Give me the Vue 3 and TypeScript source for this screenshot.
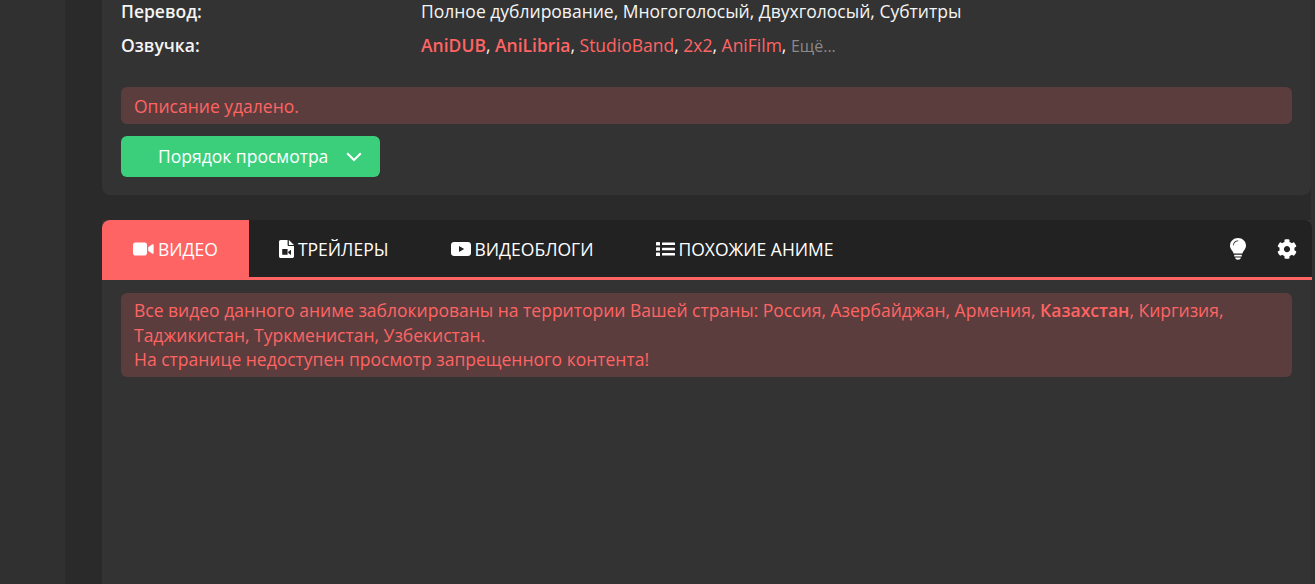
<script setup lang="ts">
const tabs = [
  { label: 'ВИДЕО', icon: 'video', active: true },
  { label: 'ТРЕЙЛЕРЫ', icon: 'file', active: false },
  { label: 'ВИДЕОБЛОГИ', icon: 'youtube', active: false },
  { label: 'ПОХОЖИЕ АНИМЕ', icon: 'list', active: false },
]
</script>

<template>
  <div class="page">
    <div class="rail"></div>
    <main class="column">
      <section class="info-card">
        <dl class="facts">
          <dt>Перевод:</dt>
          <dd>Полное дублирование, Многоголосый, Двухголосый, Субтитры</dd>
          <dt>Озвучка:</dt>
          <dd>
            <a class="strong">AniDUB</a>, <a class="strong">AniLibria</a>, <a>StudioBand</a>, <a>2x2</a>, <a>AniFilm</a>, <span class="more">Ещё...</span>
          </dd>
        </dl>
        <div class="alert single">Описание удалено.</div>
        <button class="order-btn" type="button">
          <span>Порядок просмотра</span>
          <svg class="chev" width="16" height="10" viewBox="0 0 16 10" fill="none">
            <path d="M1.200 1.200 8 8l6.800-6.800" stroke="#fff" stroke-width="2" />
          </svg>
        </button>
      </section>

      <section class="video-card">
        <nav class="tabs">
          <a v-for="t in tabs" :key="t.label" class="tab" :class="{ active: t.active }">
            <svg v-if="t.icon === 'video'" width="21" height="16" viewBox="0 0 21 16" fill="#fff">
              <rect x="0" y="1.500" width="14" height="13" rx="2.400" />
              <path d="M15.200 6.200 19 3.400c.8-.5 1.600 0 1.600.8v7.600c0 .8-.8 1.300-1.600.8l-3.800-2.800z" />
            </svg>
            <svg v-else-if="t.icon === 'file'" class="file-icon" width="15" height="18" viewBox="0 0 14 16" preserveAspectRatio="none" fill="#fff">
              <path fill-rule="evenodd" d="M1.600 0H8v4.200c0 .7.500 1.200 1.200 1.200H14v9c0 .9-.7 1.600-1.600 1.600H1.600C.7 16 0 15.300 0 14.400V1.600C0 .7.700 0 1.600 0zM9.200 0 14 4.400H9.200zM3 8v5h5V8zm5.600 2.500v0l2.600-1.800v4.600l-2.600-1.800z" />
            </svg>
            <svg v-else-if="t.icon === 'youtube'" width="20" height="14" viewBox="0 0 20 14" fill="#fff">
              <path fill-rule="evenodd" d="M3 0h14c1.700 0 3 1.300 3 3v8c0 1.700-1.300 3-3 3H3c-1.700 0-3-1.300-3-3V3c0-1.700 1.300-3 3-3zm5 4v6l5.200-3z" />
            </svg>
            <svg v-else class="list-icon" width="19" height="14" viewBox="0 0 19 14" fill="#fff">
              <rect x="0" y="0" width="4" height="3.600" rx=".6" />
              <rect x="0" y="5.200" width="4" height="3.600" rx=".6" />
              <rect x="0" y="10.400" width="4" height="3.600" rx=".6" />
              <rect x="6" y=".6" width="13" height="2.400" rx=".5" />
              <rect x="6" y="5.800" width="13" height="2.400" rx=".5" />
              <rect x="6" y="11" width="13" height="2.400" rx=".5" />
            </svg>
            <span>{{ t.label }}</span>
          </a>
          <div class="tools">
            <svg width="16" height="22" viewBox="0 0 16 22" fill="#fff">
              <path fill-rule="evenodd" d="M8 0c4.400 0 8 3.300 8 7.600 0 2-.8 3.400-1.800 4.700-.8 1-1.500 2-1.800 3.200H3.600c-.3-1.200-1-2.200-1.800-3.200C.8 11 0 9.600 0 7.600 0 3.300 3.600 0 8 0zm0 2.600C5.400 2.600 3.200 4.700 3.200 7.200c0 .4.600.4.600 0 0-2.200 1.900-4 4.200-4 .4 0 .4-.6 0-.6z" />
              <path d="M4.200 16.800h7.600v1.700H4.200zM5.200 19.500h5.600c0 1.300-1.200 2.300-2.800 2.300s-2.800-1-2.800-2.300z" />
            </svg>
            <svg width="20" height="20" viewBox="0 0 512 512" fill="#fff">
              <path d="M487.400 315.700l-42.600-24.600c4.300-23.200 4.300-47 0-70.200l42.600-24.600c4.900-2.800 7.100-8.600 5.500-14-11.100-35.600-30-67.800-54.700-94.600-3.800-4.100-10-5.100-14.800-2.300L380.800 110c-17.900-15.400-38.500-27.300-60.800-35.100V25.800c0-5.600-3.900-10.500-9.400-11.700-36.700-8.200-74.300-7.800-109.200 0-5.500 1.200-9.400 6.100-9.400 11.700V75c-22.200 7.900-42.800 19.800-60.800 35.100L88.700 85.500c-4.900-2.800-11-1.900-14.800 2.300-24.700 26.700-43.600 58.900-54.700 94.600-1.700 5.400.6 11.200 5.500 14L67.300 221c-4.300 23.200-4.300 47 0 70.200l-42.600 24.600c-4.900 2.800-7.100 8.600-5.500 14 11.100 35.600 30 67.800 54.700 94.600 3.800 4.100 10 5.100 14.800 2.300l42.600-24.600c17.900 15.400 38.500 27.300 60.800 35.100v49.200c0 5.600 3.900 10.500 9.400 11.700 36.700 8.200 74.300 7.800 109.200 0 5.500-1.200 9.400-6.100 9.400-11.700v-49.200c22.200-7.900 42.800-19.800 60.800-35.100l42.600 24.600c4.900 2.800 11 1.900 14.800-2.300 24.700-26.700 43.600-58.900 54.700-94.600 1.500-5.500-.7-11.300-5.600-14.100zM256 336c-44.100 0-80-35.900-80-80s35.900-80 80-80 80 35.900 80 80-35.900 80-80 80z" />
            </svg>
          </div>
        </nav>
        <div class="video-body">
          <div class="alert">
            Все видео данного аниме заблокированы на территории Вашей страны: Россия, Азербайджан, Армения, <b>Казахстан</b>, Киргизия, Таджикистан, Туркменистан, Узбекистан.<br />На странице недоступен просмотр запрещенного контента!
          </div>
        </div>
      </section>
    </main>
  </div>
</template>

<style>
html, body { margin: 0; background: #2f2f2f; overflow: hidden; }
</style>

<style scoped>
.page {
  display: flex;
  height: 584px;
  overflow: hidden;
  font-family: "Open Sans", "Noto Sans", sans-serif;
  font-size: 17.5px;
  color: #f5f5f5;
  background: #303030;
}
.rail { width: 65px; flex: none; }
.column {
  width: 1246px;
  flex: none;
  padding-left: 37px;
  box-sizing: border-box;
  background: #2a2a2a;
}
.info-card {
  height: 195px;
  box-sizing: border-box;
  padding: 0 19px;
  background: #333;
  border-radius: 0 0 8px 8px;
  overflow: hidden;
}
.facts {
  display: grid;
  grid-template-columns: 300px 1fr;
  grid-auto-rows: 22px;
  row-gap: 12px;
  height: 87px;
  margin: 0;
  line-height: 22px;
}
.facts dt { font-weight: 600; }
.facts dd { margin: 0; }
.facts a { color: #ff6464; }
.facts a.strong { font-weight: 600; }
.more { color: #8a8a8a; font-size: 16px; }
.alert {
  box-sizing: border-box;
  padding: 5px 13px;
  background: #5b3d3d;
  border-radius: 6px;
  color: #ff6464;
  line-height: 24.5px;
}
.alert.single { height: 37px; padding-top: 7px; }
.alert b { font-weight: 600; }
.order-btn {
  display: flex;
  align-items: center;
  margin-top: 12px;
  width: 259px;
  height: 41px;
  padding: 0 0 2px 37px;
  border: 0;
  border-radius: 6px;
  background: #3bcf7c;
  color: #fff;
  font: inherit;
  gap: 18px;
}
.chev { margin-top: 2px; }
.video-card {
  margin-top: 25px;
  height: 400px;
  background: #333;
}
.tabs {
  display: flex;
  height: 60px;
  box-sizing: border-box;
  background: #222;
  border-bottom: 3px solid #ff6464;
  border-radius: 8px 8px 0 0;
  margin-right: -1px;
}
.tab {
  display: flex;
  align-items: center;
  gap: 4px;
  padding: 0 31px 2px;
  height: 60px;
  box-sizing: border-box;
  color: #fff;
}
.tab.active {
  background: #ff6464;
  border-radius: 8px 0 0 0;
}
.file-icon { margin-left: -1px; }
.list-icon { margin-left: 1px; margin-right: -1px; }
.tools {
  margin-left: auto;
  display: flex;
  align-items: center;
  gap: 31px;
  padding-right: 15px;
}
.video-body { padding: 13px 19px; }
</style>
